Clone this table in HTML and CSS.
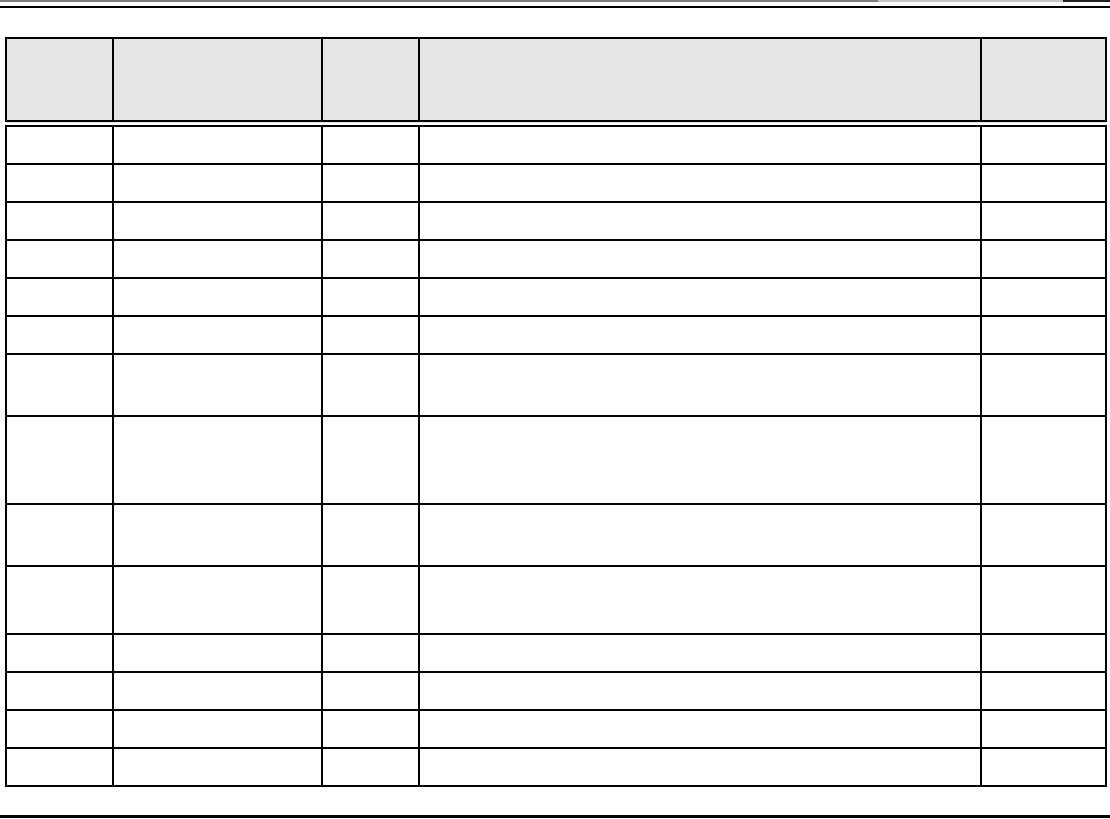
FILE: index.html
```html
<!DOCTYPE html>
<html lang="en">
<head>
<meta charset="utf-8">
<title>Table</title>
<link rel="stylesheet" href="styles.css">
</head>
<body>
<div class="page">
  <header class="top-rules">
    <div class="rule-grey">
      <span class="seg seg-a"></span><span class="seg seg-b"></span><span class="seg seg-c"></span>
    </div>
    <div class="rule-black"></div>
  </header>
  <main class="content">
    <table class="grid">
      <colgroup>
        <col class="c1"><col class="c2"><col class="c3"><col class="c4"><col class="c5">
      </colgroup>
      <thead>
        <tr class="head-row"><th></th><th></th><th></th><th></th><th></th></tr>
      </thead>
      <tbody>
        <tr class="r41"><td></td><td></td><td></td><td></td><td></td></tr>
        <tr class="r38"><td></td><td></td><td></td><td></td><td></td></tr>
        <tr class="r38"><td></td><td></td><td></td><td></td><td></td></tr>
        <tr class="r38"><td></td><td></td><td></td><td></td><td></td></tr>
        <tr class="r38"><td></td><td></td><td></td><td></td><td></td></tr>
        <tr class="r38"><td></td><td></td><td></td><td></td><td></td></tr>
        <tr class="r62"><td></td><td></td><td></td><td></td><td></td></tr>
        <tr class="r88"><td></td><td></td><td></td><td></td><td></td></tr>
        <tr class="r62"><td></td><td></td><td></td><td></td><td></td></tr>
        <tr class="r68"><td></td><td></td><td></td><td></td><td></td></tr>
        <tr class="r38"><td></td><td></td><td></td><td></td><td></td></tr>
        <tr class="r38"><td></td><td></td><td></td><td></td><td></td></tr>
        <tr class="r38"><td></td><td></td><td></td><td></td><td></td></tr>
        <tr class="r38"><td></td><td></td><td></td><td></td><td></td></tr>
      </tbody>
    </table>
  </main>
  <footer class="bottom-rule"></footer>
</div>
</body>
</html>
```
FILE: styles.css
```css
html, body {
  margin: 0;
  padding: 0;
  background: #fff;
  font-family: "Liberation Sans", Arial, sans-serif;
}
.page {
  width: 1110px;
  height: 819px;
  display: flex;
  flex-direction: column;
}
.top-rules {
  display: flex;
  flex-direction: column;
}
.rule-grey {
  display: flex;
  height: 2px;
}
.seg { display: block; height: 2px; }
.seg-a { width: 878px; background: #808080; }
.seg-b { width: 185px; background: #c8c8c8; }
.seg-c { flex: 1; background: #222; }
.rule-black {
  margin-top: 4px;
  height: 2px;
  background: #000;
}
.content {
  padding: 29px 0 0 5px;
}
.grid {
  border-collapse: collapse;
  table-layout: fixed;
  width: 1100px;
}
.c1 { width: 107px; }
.c2 { width: 209px; }
.c3 { width: 97px; }
.c4 { width: 562px; }
.c5 { width: 125px; }
.grid th, .grid td {
  border: 2px solid #000;
  padding: 0;
}
.grid th {
  background: #e6e6e6;
  border-bottom: 7px double #000;
}
.head-row { height: 85px; }
.r41 { height: 41px; }
.r38 { height: 38px; }
.r62 { height: 62px; }
.r68 { height: 68px; }
.r88 { height: 88px; }
.bottom-rule {
  margin-top: auto;
  margin-bottom: 1px;
  height: 3px;
  background: #000;
}
```
